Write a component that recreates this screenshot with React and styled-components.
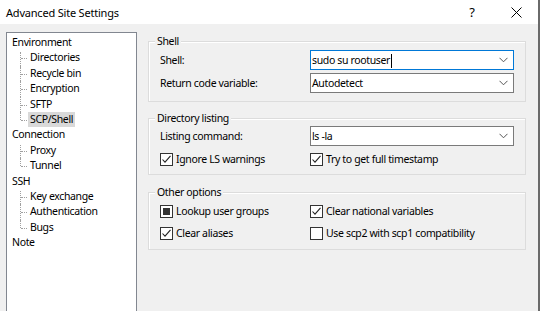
import React from "react";
import styled, { createGlobalStyle } from "styled-components";

const GlobalStyle = createGlobalStyle`
  html, body { margin: 0; padding: 0; background: #f0f0f0; }
  body {
    font-family: "Segoe UI", "Noto Sans", "Open Sans", sans-serif;
    font-size: 10.5px;
    letter-spacing: -0.35px;
    color: #000;
  }
`;

const Window = styled.div`
  width: 540px;
  height: 311px;
  box-sizing: border-box;
  background: #f0f0f0;
  border-right: 2px solid #6a6a6a;
  display: flex;
  flex-direction: column;
  overflow: hidden;
`;

const TitleBar = styled.div`
  height: 24px;
  flex: 0 0 24px;
  background: #fff;
  display: flex;
  align-items: center;
  padding-left: 6px;
  font-size: 11px;
  letter-spacing: -0.2px;
`;

const Title = styled.div`
  flex: 1;
`;

const TitleButton = styled.div`
  width: 44px;
  height: 24px;
  display: flex;
  align-items: center;
  justify-content: center;
  font-size: 13px;
`;

const Body = styled.div`
  flex: 1;
  display: flex;
  gap: 11px;
  padding: 8px 0 0 6px;
  min-height: 0;
`;

const Tree = styled.div`
  width: 131px;
  height: 300px;
  box-sizing: border-box;
  background: #fff;
  border: 1px solid #828790;
  padding-top: 2px;
  flex: 0 0 auto;
`;

const TreeRow = styled.div`
  position: relative;
  height: 15.4px;
  line-height: 15.4px;
  white-space: nowrap;
  padding-left: ${(p) => (p.$child ? "21px" : "5px")};

  ${(p) =>
    p.$child &&
    `
    &::before {
      content: "";
      position: absolute;
      left: 13px;
      top: ${p.$first ? "2px" : "0"};
      height: ${p.$last ? "8px" : "100%"};
      border-left: 1px dotted #a0a0a0;
    }
    &::after {
      content: "";
      position: absolute;
      left: 14px;
      top: 8px;
      width: 6px;
      border-top: 1px dotted #a0a0a0;
    }
  `}
`;

const TreeLabel = styled.span`
  display: inline-block;
  padding: 0 2px;
  margin-left: ${(p) => (p.$child ? "0" : "-2px")};
  background: ${(p) => (p.$selected ? "#d9d9d9" : "transparent")};
  line-height: 15px;
`;

const Content = styled.div`
  width: 378px;
  display: flex;
  flex-direction: column;
  padding-top: 9px;
`;

const Group = styled.div`
  position: relative;
  box-sizing: border-box;
  height: ${(p) => p.$h}px;
  margin-bottom: ${(p) => p.$mb || 0}px;
  border: 1px solid #dcdcdc;
  box-shadow: inset 1px 1px 0 #fff;
  padding: ${(p) => p.$pad};
  display: flex;
  flex-direction: column;
  gap: ${(p) => p.$gap}px;
`;

const Legend = styled.span`
  position: absolute;
  left: 6px;
  top: -9px;
  padding: 0 2px;
  background: #f0f0f0;
  line-height: 16px;
`;

const FieldRow = styled.div`
  display: grid;
  grid-template-columns: 150px 204px;
  align-items: center;
  padding-left: 11px;
  height: ${(p) => p.$h || 20}px;
`;

const Combo = styled.div`
  box-sizing: border-box;
  height: 20px;
  background: #fff;
  border: 1px solid ${(p) => (p.$focused ? "#0078d7" : "#7a7a7a")};
  display: flex;
  align-items: center;
  padding-left: 1px;
  padding-right: 5px;
`;

const ComboText = styled.span`
  flex: 1;
  line-height: 18px;
  white-space: nowrap;
`;

const Caret = styled.span`
  display: inline-block;
  width: 1px;
  height: 14px;
  background: #000;
  vertical-align: middle;
  margin-left: 1px;
`;

const CheckLabel = styled.label`
  display: flex;
  align-items: center;
  gap: 3px;
  white-space: nowrap;
`;

const Box = styled.span`
  box-sizing: border-box;
  width: 13px;
  height: 13px;
  border: 1px solid #333;
  background: #fff;
  display: inline-flex;
  align-items: center;
  justify-content: center;
`;

const Mixed = styled.span`
  width: 7px;
  height: 7px;
  background: #333;
`;

const Chevron = () => (
  <svg width="9" height="6" viewBox="0 0 9 6">
    <polyline points="0.5,0.8 4.5,4.8 8.5,0.8" fill="none" stroke="#555" strokeWidth="1" />
  </svg>
);

const Check = ({ state }) => (
  <Box>
    {state === "checked" && (
      <svg width="11" height="11" viewBox="0 0 11 11">
        <polyline points="1.5,5.5 4,8.2 9.5,1.8" fill="none" stroke="#222" strokeWidth="1.1" />
      </svg>
    )}
    {state === "mixed" && <Mixed />}
  </Box>
);

const CheckItem = ({ state, children }) => (
  <CheckLabel>
    <Check state={state} />
    <span>{children}</span>
  </CheckLabel>
);

const CloseIcon = () => (
  <svg width="11" height="11" viewBox="0 0 11 11">
    <path d="M0.5 0.5 L10.5 10.5 M10.5 0.5 L0.5 10.5" stroke="#000" strokeWidth="1" />
  </svg>
);

const tree = [
  { label: "Environment" },
  { label: "Directories", child: true, first: true },
  { label: "Recycle bin", child: true },
  { label: "Encryption", child: true },
  { label: "SFTP", child: true },
  { label: "SCP/Shell", child: true, last: true, selected: true },
  { label: "Connection" },
  { label: "Proxy", child: true, first: true },
  { label: "Tunnel", child: true, last: true },
  { label: "SSH" },
  { label: "Key exchange", child: true, first: true },
  { label: "Authentication", child: true },
  { label: "Bugs", child: true, last: true },
  { label: "Note" },
];

export default function App() {
  return (
    <>
      <GlobalStyle />
      <Window>
        <TitleBar>
          <Title>Advanced Site Settings</Title>
          <TitleButton>?</TitleButton>
          <TitleButton>
            <CloseIcon />
          </TitleButton>
        </TitleBar>
        <Body>
          <Tree>
            {tree.map((t) => (
              <TreeRow key={t.label} $child={t.child} $first={t.first} $last={t.last}>
                <TreeLabel $child={t.child} $selected={t.selected}>
                  {t.label}
                </TreeLabel>
              </TreeRow>
            ))}
          </Tree>
          <Content>
            <Group $h={61} $mb={16} $pad="8px 0 0 0" $gap={3}>
              <Legend>Shell</Legend>
              <FieldRow>
                <span>Shell:</span>
                <Combo $focused>
                  <ComboText>
                    sudo su rootuser
                    <Caret />
                  </ComboText>
                  <Chevron />
                </Combo>
              </FieldRow>
              <FieldRow>
                <span>Return code variable:</span>
                <Combo>
                  <ComboText>Autodetect</ComboText>
                  <Chevron />
                </Combo>
              </FieldRow>
            </Group>
            <Group $h={57} $mb={17} $pad="7px 0 0 0" $gap={5}>
              <Legend>Directory listing</Legend>
              <FieldRow>
                <span>Listing command:</span>
                <Combo>
                  <ComboText>ls -la</ComboText>
                  <Chevron />
                </Combo>
              </FieldRow>
              <FieldRow $h={16}>
                <CheckItem state="checked">Ignore LS warnings</CheckItem>
                <CheckItem state="checked">Try to get full timestamp</CheckItem>
              </FieldRow>
            </Group>
            <Group $h={58} $pad="10px 0 0 0" $gap={6}>
              <Legend>Other options</Legend>
              <FieldRow $h={16}>
                <CheckItem state="mixed">Lookup user groups</CheckItem>
                <CheckItem state="checked">Clear national variables</CheckItem>
              </FieldRow>
              <FieldRow $h={16}>
                <CheckItem state="checked">Clear aliases</CheckItem>
                <CheckItem state="none">Use scp2 with scp1 compatibility</CheckItem>
              </FieldRow>
            </Group>
          </Content>
        </Body>
      </Window>
    </>
  );
}
